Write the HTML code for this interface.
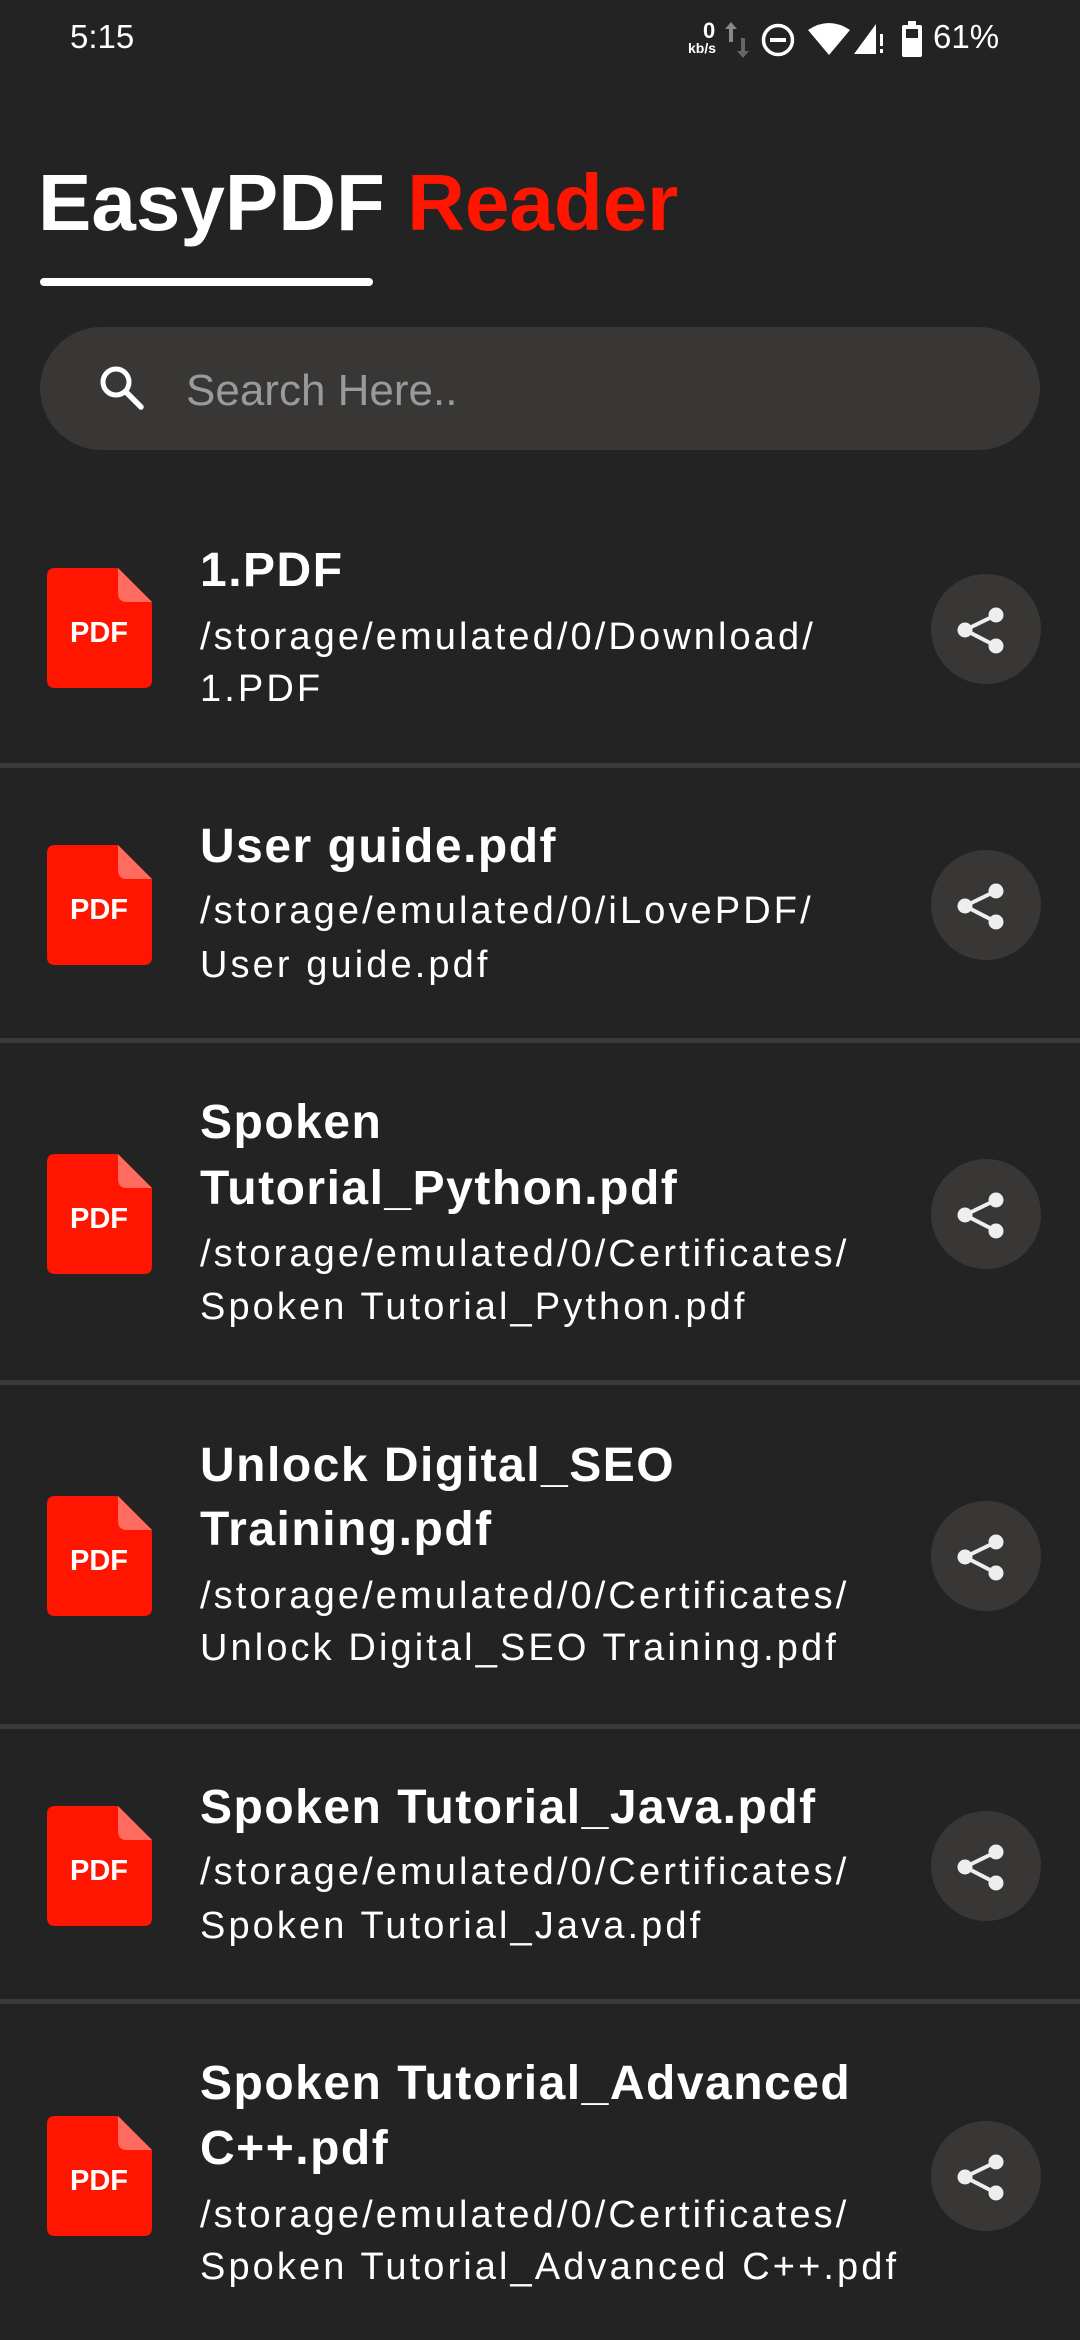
<!DOCTYPE html>
<html><head><meta charset="utf-8">
<style>
*{margin:0;padding:0;box-sizing:border-box}
html,body{width:1080px;height:2340px;background:#242324;overflow:hidden;font-family:"Liberation Sans",sans-serif;color:#fff}
.a{position:absolute;white-space:nowrap}
.t{font-weight:bold;font-size:48px;left:200px;line-height:1;letter-spacing:1.5px}
.p{font-size:38px;left:200px;letter-spacing:3.1px;line-height:1}
.div{position:absolute;left:0;width:1080px;height:5px;background:#3a3a3a}
.sh{position:absolute;left:931px;width:110px;height:110px;border-radius:55px;background:#383736}
.ic{position:absolute;left:47px;width:105px;height:120px}
</style></head><body>
<div class="a" style="left:70px;top:18px;font-size:33px;">5:15</div>
<div class="a" style="left:703px;top:18px;font-size:22px;font-weight:bold">0</div>
<div class="a" style="left:688px;top:40px;font-size:14px;font-weight:bold">kb/s</div>
<svg class="a" style="left:722px;top:20px" width="32" height="40" viewBox="0 0 32 40"><path d="M9 2 L3 9 H7 V22 H11 V9 H15Z" fill="#888"/><path d="M21 38 L15 31 H19 V18 H23 V31 H27Z" fill="#666"/></svg>
<svg class="a" style="left:760px;top:22px" width="36" height="36" viewBox="0 0 36 36"><circle cx="18" cy="18" r="14.5" fill="none" stroke="#fff" stroke-width="3.5"/><rect x="10" y="16" width="16" height="4" fill="#fff"/></svg>
<svg class="a" style="left:806px;top:22px" width="46" height="34" viewBox="0 0 46 34"><path d="M2 8 Q23 -6 44 8 L23 33Z" fill="#fff"/></svg>
<svg class="a" style="left:852px;top:22px" width="36" height="34" viewBox="0 0 36 34"><path d="M24 2 V32 H2Z" fill="#fff"/><rect x="28" y="12" width="3" height="12" fill="#fff"/><rect x="28" y="27" width="3" height="4" fill="#fff"/></svg>
<svg class="a" style="left:900px;top:20px" width="24" height="38" viewBox="0 0 24 38"><rect x="8" y="1" width="8" height="4" fill="#fff"/><rect x="2" y="5" width="20" height="32" rx="2" fill="#fff"/><rect x="6" y="9" width="12" height="9" fill="#242324"/></svg>
<div class="a" style="left:933px;top:18px;font-size:33px;">61%</div>

<div class="a" style="left:38px;top:163px;font-size:80px;font-weight:bold;line-height:1;letter-spacing:0px">EasyPDF <span style="color:#ff1500">Reader</span></div>
<div class="a" style="left:40px;top:278px;width:333px;height:8px;border-radius:4px;background:#fff"></div>

<div class="a" style="left:40px;top:327px;width:1000px;height:123px;border-radius:62px;background:#383736"></div>
<svg class="a" style="left:96px;top:362px" width="52" height="52" viewBox="0 0 52 52"><circle cx="20" cy="20" r="13" fill="none" stroke="#fff" stroke-width="5"/><path d="M30 30 L45 45" stroke="#fff" stroke-width="5.5" stroke-linecap="round"/></svg>
<div class="a" style="left:186px;top:366px;font-size:44px;color:#9a9a9a">Search Here..</div>

<svg width="0" height="0" style="position:absolute"><defs>
<symbol id="pdf" viewBox="0 0 105 120"><path d="M8 0 H71 L105 34 V112 Q105 120 97 120 H8 Q0 120 0 112 V8 Q0 0 8 0Z" fill="#ff1500"/><path d="M71 0 L105 34 H80 Q71 34 71 25Z" fill="#ff6b5e"/><text x="52" y="74" text-anchor="middle" font-family="Liberation Sans,sans-serif" font-weight="bold" font-size="29" fill="#fff">PDF</text></symbol>
<symbol id="share" viewBox="0 0 110 110"><g fill="#eee"><circle cx="65" cy="41" r="7.5"/><circle cx="34" cy="56" r="7.5"/><circle cx="65" cy="72" r="7.5"/></g><path d="M65 41 L34 56 L65 72" stroke="#eee" stroke-width="4" fill="none"/></symbol>
</defs></svg>

<svg class="ic" style="top:568px"><use href="#pdf"/></svg>
<div class="a t" style="top:547px">1.PDF</div>
<div class="a p" style="top:618px">/storage/emulated/0/Download/</div>
<div class="a p" style="top:670px">1.PDF</div>
<svg class="sh" style="top:574px"><use href="#share"/></svg>
<div class="div" style="top:763px"></div>

<svg class="ic" style="top:845px"><use href="#pdf"/></svg>
<div class="a t" style="top:823px">User guide.pdf</div>
<div class="a p" style="top:892px">/storage/emulated/0/iLovePDF/</div>
<div class="a p" style="top:946px">User guide.pdf</div>
<svg class="sh" style="top:850px"><use href="#share"/></svg>
<div class="div" style="top:1038px"></div>

<svg class="ic" style="top:1154px"><use href="#pdf"/></svg>
<div class="a t" style="top:1099px">Spoken</div>
<div class="a t" style="top:1165px">Tutorial_Python.pdf</div>
<div class="a p" style="top:1235px">/storage/emulated/0/Certificates/</div>
<div class="a p" style="top:1288px">Spoken Tutorial_Python.pdf</div>
<svg class="sh" style="top:1159px"><use href="#share"/></svg>
<div class="div" style="top:1380px"></div>

<svg class="ic" style="top:1496px"><use href="#pdf"/></svg>
<div class="a t" style="top:1442px">Unlock Digital_SEO</div>
<div class="a t" style="top:1506px">Training.pdf</div>
<div class="a p" style="top:1577px">/storage/emulated/0/Certificates/</div>
<div class="a p" style="top:1629px">Unlock Digital_SEO Training.pdf</div>
<svg class="sh" style="top:1501px"><use href="#share"/></svg>
<div class="div" style="top:1724px"></div>

<svg class="ic" style="top:1806px"><use href="#pdf"/></svg>
<div class="a t" style="top:1784px">Spoken Tutorial_Java.pdf</div>
<div class="a p" style="top:1853px">/storage/emulated/0/Certificates/</div>
<div class="a p" style="top:1907px">Spoken Tutorial_Java.pdf</div>
<svg class="sh" style="top:1811px"><use href="#share"/></svg>
<div class="div" style="top:1999px"></div>

<svg class="ic" style="top:2116px"><use href="#pdf"/></svg>
<div class="a t" style="top:2060px">Spoken Tutorial_Advanced</div>
<div class="a t" style="top:2125px">C++.pdf</div>
<div class="a p" style="top:2196px">/storage/emulated/0/Certificates/</div>
<div class="a p" style="top:2248px">Spoken Tutorial_Advanced C++.pdf</div>
<svg class="sh" style="top:2121px"><use href="#share"/></svg>
</body></html>
